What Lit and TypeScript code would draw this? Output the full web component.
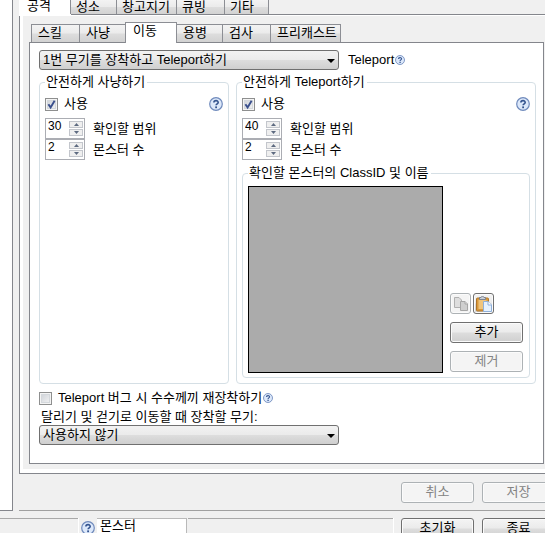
import { LitElement, html, css, svg, nothing } from "lit";
import { customElement, property, state } from "lit/decorators.js";
import { classMap } from "lit/directives/class-map.js";

const controls = css`
  * {
    box-sizing: border-box;
  }
  button,
  input,
  select {
    font: inherit;
    color: inherit;
    margin: 0;
  }
  .btn {
    width: 73px;
    height: 21px;
    padding: 0 0 2px;
    line-height: 17px;
    border: 1px solid #707070;
    border-radius: 3px;
    background: linear-gradient(#f4f4f4, #ebebeb 48%, #dddddd 52%, #cfcfcf);
    box-shadow: inset 0 0 0 1px #fbfbfb;
    color: #000;
  }
  .btn:disabled {
    border-color: #adb2b5;
    background: #f4f4f4;
    color: #838383;
  }
`;

@customElement("help-mark")
export class HelpMark extends LitElement {
  @property({ type: Boolean }) small = false;

  static styles = css`
    :host {
      display: inline-flex;
      flex: none;
    }
    .mark {
      display: block;
      width: 14px;
      height: 14px;
    }
    .small {
      width: 10px;
      height: 10px;
    }
  `;

  render() {
    return html`<svg class=${classMap({ mark: true, small: this.small })} viewBox="0 0 14 14" role="img" aria-label="도움말">
      <circle cx="7" cy="7" r="6.3" fill="#dce8fa" stroke="#6f8abc" stroke-width="1.2" />
      <path d="M4.9 5.6C4.9 2.9 9.2 3 9.2 5.4C9.2 6.8 7.1 6.8 7.1 8.3" fill="none" stroke="#34548f" stroke-width="1.6" />
      <rect x="6.2" y="9.4" width="1.8" height="1.8" fill="#34548f" />
    </svg>`;
  }
}

@customElement("spin-box")
export class SpinBox extends LitElement {
  @property({ type: Number }) value = 0;
  @property() label = "";

  static styles = [
    controls,
    css`
      :host {
        display: block;
      }
      .row {
        display: flex;
        align-items: center;
        gap: 8px;
        height: 21px;
      }
      .box {
        display: flex;
        width: 40px;
        height: 21px;
        padding: 0 1px;
        border: 1px solid #abadb3;
        background: #fff;
      }
      .field {
        flex: 1;
        min-width: 0;
        height: 15px;
        padding: 0 0 0 1px;
        border: 0;
        outline: 0;
        background: none;
        font-size: 12px;
        line-height: 15px;
        appearance: textfield;
      }
      .field::-webkit-inner-spin-button {
        appearance: none;
      }
      .steps {
        display: flex;
        flex-direction: column;
        gap: 1px;
        padding-top: 2px;
      }
      .step {
        display: flex;
        align-items: center;
        justify-content: center;
        width: 14px;
        height: 7px;
        padding: 0;
        border: 1px solid #c3c6cc;
        background: #efefef;
      }
      .arrow {
        display: block;
        width: 5px;
        height: 3px;
      }
    `,
  ];

  render() {
    return html`<div class="row">
      <span class="box">
        <input id="n" class="field" type="number" .value=${String(this.value)} />
        <span class="steps">
          <button class="step" aria-label="증가" @click=${() => this.value++}>
            <svg class="arrow" viewBox="0 0 5 3"><path d="M0 3L2.5 0L5 3Z" fill="#5d6a80" /></svg>
          </button>
          <button class="step" aria-label="감소" @click=${() => this.value--}>
            <svg class="arrow" viewBox="0 0 5 3"><path d="M0 0L2.5 3L5 0Z" fill="#5d6a80" /></svg>
          </button>
        </span>
      </span>
      <label for="n">${this.label}</label>
    </div>`;
  }
}

@customElement("check-option")
export class CheckOption extends LitElement {
  @property({ type: Boolean }) checked = false;

  static styles = [
    controls,
    css`
      :host {
        display: block;
      }
      .option {
        display: flex;
        align-items: center;
        gap: 6px;
        height: 18px;
      }
      .tick {
        position: relative;
        display: block;
        width: 13px;
        height: 13px;
      }
      .input {
        display: block;
        width: 13px;
        height: 13px;
        appearance: none;
        border: 1px solid #8e8f8f;
        background: linear-gradient(135deg, #cbcfd5, #f6f6f6);
        box-shadow: inset 0 0 0 1px #f4f4f4, inset 0 0 0 2px #d4d8dc;
      }
      .glyph {
        position: absolute;
        inset: 0;
        pointer-events: none;
      }
    `,
  ];

  render() {
    return html`<label class="option">
      <span class="tick">
        <input class="input" type="checkbox" .checked=${this.checked}
          @change=${(e: Event) => (this.checked = (e.target as HTMLInputElement).checked)} />
        ${this.checked
          ? html`<svg class="glyph" viewBox="0 0 13 13"><path d="M3.4 6.2L5.6 9.4L9.6 2.8" fill="none" stroke="#3a4f8c" stroke-width="1.9" /></svg>`
          : nothing}
      </span>
      <slot></slot>
    </label>`;
  }
}

@customElement("drop-down")
export class DropDown extends LitElement {
  @property() name = "";
  @property({ type: Array }) options: string[] = [];

  static styles = [
    controls,
    css`
      :host {
        display: block;
        width: 300px;
      }
      .wrap {
        position: relative;
        display: block;
      }
      .select {
        display: block;
        width: 100%;
        height: 20px;
        padding: 0 20px 1px 3px;
        line-height: 17px;
        appearance: none;
        border: 1px solid #707070;
        border-radius: 3px;
        background: linear-gradient(#f2f2f2, #ebebeb 48%, #dddddd 52%, #cfcfcf);
      }
      .arrow {
        position: absolute;
        right: 4px;
        top: 9px;
        width: 8px;
        height: 4px;
        pointer-events: none;
      }
    `,
  ];

  render() {
    return html`<span class="wrap">
      <select class="select" aria-label=${this.name}>
        ${this.options.map((o) => html`<option>${o}</option>`)}
      </select>
      <svg class="arrow" viewBox="0 0 8 4"><path d="M0 0H8L4 4Z" fill="#000" /></svg>
    </span>`;
  }
}

const copyIcon = svg`
  <path d="M1.5 1.5H6L8.5 4V11.5H1.5Z" fill="#dedede" stroke="#b0b0b0" />
  <path d="M7.5 5.5H12L14.5 8V14.5H7.5Z" fill="#cfcfcf" stroke="#a6a6a6" />
  <path d="M12 5.5V8H14.5" fill="#e6e6e6" stroke="#a6a6a6" />`;

const pasteIcon = svg`
  <rect x="0.5" y="2" width="12" height="13" rx="1" fill="#d99a3c" stroke="#b0762a" />
  <rect x="2.5" y="4" width="8" height="9" fill="#efc47c" />
  <path d="M3.5 3.5V1.5H5C5 0 8 0 8 1.5H9.5V3.5Z" fill="#c9ced6" stroke="#7d8490" />
  <path d="M7.5 5.5H12L15.5 9V15.5H7.5Z" fill="#e6f1fd" stroke="#8fb0da" />
  <path d="M12 5.5V9H15.5" fill="#fff" stroke="#8fb0da" />`;

@customElement("app-root")
export class AppRoot extends LitElement {
  @state() private outerTab = "공격";
  @state() private innerTab = "이동";

  static styles = [
    controls,
    css`
      :host {
        display: block;
        height: 100vh;
        overflow: hidden;
        background: #f0f0f0;
        color: #000;
        font: 13px/18px "Liberation Sans", "Noto Sans CJK KR", sans-serif;
      }
      .window {
        display: flex;
        gap: 6px;
      }
      .side {
        flex: none;
        width: 13px;
        border: solid #84868c;
        border-width: 0 1px 1px 0;
        background: #fff;
      }
      .main {
        flex: 1;
        min-width: 0;
      }
      .tabs {
        display: flex;
        align-items: flex-end;
        position: relative;
      }
      .tab {
        height: 18px;
        margin-right: -1px;
        padding: 0 0 1px 6px;
        line-height: 16px;
        text-align: left;
        white-space: nowrap;
        border: 1px solid #8c8e94;
        border-bottom: 0;
        background: linear-gradient(#f3f3f3, #ebebeb 48%, #dddddd 52%, #d2d2d2);
      }
      .tab.active {
        background: #fff;
      }
      .outer {
        height: 14px;
      }
      .outer .tab {
        height: 14px;
        padding: 0 0 0 5px;
        line-height: 14px;
        border-top: 0;
      }
      .outer .active {
        height: 16px;
        margin-bottom: -2px;
        padding: 0 0 5px 7px;
        line-height: 11px;
        border-color: #fff;
      }
      .inner {
        height: 20px;
        margin-left: 2px;
      }
      .inner .active {
        height: 21px;
        margin-bottom: -1px;
        padding: 0 0 4px 7px;
      }
      .w45 {
        width: 45px;
      }
      .w47 {
        width: 47px;
      }
      .w49 {
        width: 49px;
      }
      .w52 {
        width: 52px;
      }
      .w61 {
        width: 61px;
      }
      .w71 {
        width: 71px;
      }
      .sheet {
        padding: 1px 0 4px 3px;
        border: solid #84868c;
        border-width: 1px 0 1px 1px;
        background: #fff;
      }
      .area {
        padding: 6px 1px 5px 6px;
        background: #f0f0f0;
      }
      .page {
        padding: 7px 7px 18px 9px;
        border: 1px solid #84868c;
        background: #fff;
      }
      .line {
        display: flex;
        align-items: center;
      }
      .pick {
        gap: 9px;
        height: 20px;
      }
      .hinted {
        display: flex;
        align-items: center;
        gap: 1px;
      }
      .groups {
        display: grid;
        grid-template-columns: minmax(0, 19fr) minmax(0, 30fr);
        gap: 7px;
        margin: 3px 0 5px;
      }
      .group {
        min-width: 0;
        margin: 0;
        padding: 4px 5px 5px;
        border: 1px solid #d5dfe5;
        border-radius: 4px;
      }
      .legend {
        height: 18px;
        padding: 0 2px 0 1px;
        line-height: 18px;
        white-space: nowrap;
      }
      .between {
        justify-content: space-between;
        height: 18px;
        margin-bottom: 5px;
      }
      .monsters {
        margin-top: 4px;
        padding: 4px 6px 4px 5px;
      }
      .split {
        display: flex;
        gap: 7px;
      }
      .list {
        flex: 1;
        height: 187px;
        border: 1px solid #000;
        background: #ababab;
      }
      .actions {
        display: flex;
        flex-direction: column;
        justify-content: flex-end;
        gap: 8px;
        padding-bottom: 1px;
      }
      .icons {
        display: flex;
        gap: 2px;
      }
      .btn.icon {
        display: grid;
        place-items: center;
        width: 21px;
        padding: 0;
      }
      .glyph {
        width: 16px;
        height: 16px;
      }
      .caption {
        display: block;
        padding: 2px 2px 0;
        line-height: 16px;
      }
      .footer {
        display: flex;
        justify-content: flex-end;
        gap: 8px;
        height: 37px;
        margin-right: -10px;
        padding-top: 8px;
        border-bottom: 1px solid #a0a0a0;
      }
      .status {
        display: flex;
        align-items: flex-start;
        margin: 7px -10px 0 0;
      }
      .cell {
        height: 20px;
        border: solid #a9a9a9;
        border-width: 1px 0 0;
        box-shadow: 1px 0 #fff;
      }
      .first {
        width: 78px;
      }
      .mark {
        padding: 3px 2px 0 3px;
      }
      .target {
        width: 90px;
        height: 16px;
        padding: 0 3px 1px;
        border: solid #b9b9b9;
        border-width: 1px 1px 0 0;
        outline: 0;
        background: #fff;
      }
      .rest {
        flex: 1;
        margin-left: 1px;
      }
      .end {
        display: flex;
        gap: 8px;
        padding-left: 8px;
      }
    `,
  ];

  private tab(name: string, width: string, outer: boolean) {
    const active = name === (outer ? this.outerTab : this.innerTab);
    return html`<button
      role="tab"
      aria-selected=${active ? "true" : "false"}
      class=${classMap({ tab: true, active, [width]: true })}
      @click=${() => (outer ? (this.outerTab = name) : (this.innerTab = name))}
    >${name}</button>`;
  }

  private watch(range: number, count: number) {
    return html`
      <div class="line between">
        <check-option checked>사용</check-option>
        <help-mark></help-mark>
      </div>
      <spin-box .value=${range} label="확인할 범위"></spin-box>
      <spin-box .value=${count} label="몬스터 수"></spin-box>
    `;
  }

  render() {
    return html`
      <div class="window">
        <div class="side"></div>
        <main class="main">
          <div class="tabs outer" role="tablist">
            ${this.tab("공격", "w52", true)}${this.tab("성소", "w47", true)}${this.tab("창고지기", "w61", true)}${this.tab("큐빙", "w49", true)}${this.tab("기타", "w45", true)}
          </div>
          <div class="sheet">
            <div class="area">
              <div class="tabs inner" role="tablist">
                ${this.tab("스킬", "w49", false)}${this.tab("사냥", "w47", false)}${this.tab("이동", "w52", false)}${this.tab("용병", "w47", false)}${this.tab("검사", "w49", false)}${this.tab("프리캐스트", "w71", false)}
              </div>
              <div class="page">
                <div class="line pick">
                  <drop-down name="Teleport" .options=${["1번 무기를 장착하고 Teleport하기"]}></drop-down>
                  <span class="hinted">Teleport<help-mark small></help-mark></span>
                </div>
                <div class="groups">
                  <fieldset class="group">
                    <legend class="legend">안전하게 사냥하기</legend>
                    ${this.watch(30, 2)}
                  </fieldset>
                  <fieldset class="group">
                    <legend class="legend">안전하게 Teleport하기</legend>
                    ${this.watch(40, 2)}
                    <fieldset class="group monsters">
                      <legend class="legend">확인할 몬스터의 ClassID 및 이름</legend>
                      <div class="split">
                        <div class="list"></div>
                        <div class="actions">
                          <div class="icons">
                            <button class="btn icon" disabled aria-label="복사">
                              <svg class="glyph" viewBox="0 0 16 16">${copyIcon}</svg>
                            </button>
                            <button class="btn icon" aria-label="붙여넣기">
                              <svg class="glyph" viewBox="0 0 16 16">${pasteIcon}</svg>
                            </button>
                          </div>
                          <button class="btn">추가</button>
                          <button class="btn" disabled>제거</button>
                        </div>
                      </div>
                    </fieldset>
                  </fieldset>
                </div>
                <div class="hinted">
                  <check-option>Teleport 버그 시 수수께끼 재장착하기</check-option>
                  <help-mark small></help-mark>
                </div>
                <span class="caption">달리기 및 걷기로 이동할 때 장착할 무기:</span>
                <drop-down name="달리기 및 걷기로 이동할 때 장착할 무기" .options=${["사용하지 않기"]}></drop-down>
              </div>
            </div>
          </div>
          <div class="footer">
            <button class="btn" disabled>취소</button>
            <button class="btn" disabled>저장</button>
          </div>
        </main>
      </div>
      <div class="status">
        <div class="cell first"></div>
        <div class="mark"><help-mark></help-mark></div>
        <input class="target" aria-label="대상" .value=${"몬스터"} />
        <div class="cell rest"></div>
        <div class="end">
          <button class="btn">초기화</button>
          <button class="btn">종료</button>
        </div>
      </div>
    `;
  }
}
